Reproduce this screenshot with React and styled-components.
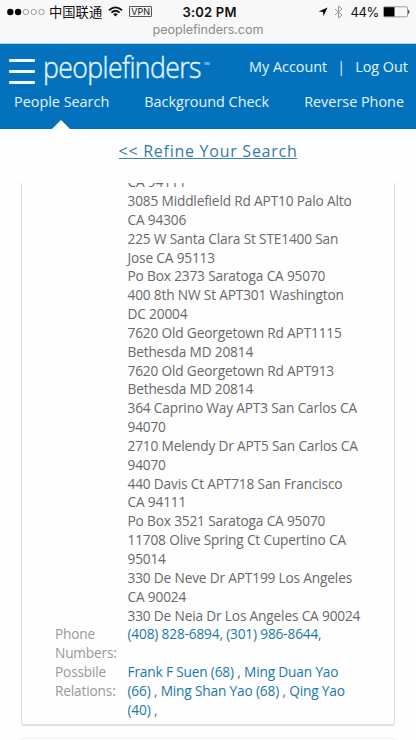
import React from "react";
import styled, { createGlobalStyle } from "styled-components";

const GlobalStyle = createGlobalStyle`
  * { box-sizing: border-box; }
  html, body { margin: 0; padding: 0; background: #fefefe; overflow: hidden; }
`;

const Screen = styled.main`
  display: flex;
  flex-direction: column;
  width: 416px;
  height: 740px;
  overflow: hidden;
  background: #fefefe;
  font-family: "Open Sans", sans-serif;
`;

const BrowserChrome = styled.div`
  height: 44px;
  flex: none;
  background: #f8f8f8;
  border-bottom: 1px solid #a3dcee;
  font-family: Inter, "Noto Sans CJK SC", sans-serif;
`;

const StatusBar = styled.div`
  display: grid;
  grid-template-columns: 175.5px 100px 1fr;
  align-items: center;
  height: 22px;
  padding: 1px 6px 0 7px;
  color: #111;
`;

const StatusGroup = styled.div`
  display: flex;
  align-items: center;
  justify-content: ${(p) => (p.$end ? "flex-end" : "flex-start")};
`;

const Carrier = styled.span`
  margin-left: 4px;
  font: 13.3px/20px "Noto Sans CJK SC", sans-serif;
`;

const WifiIcon = styled.svg`
  margin-left: 6px;
`;

const VpnBadge = styled.span`
  width: 23px;
  height: 11px;
  margin-left: 6px;
  border: 1px solid #555;
  border-radius: 1px;
  font-size: 9px;
  line-height: 9px;
  text-align: center;
`;

const Clock = styled.span`
  font-size: 13px;
  font-weight: 600;
  line-height: 20px;
  white-space: nowrap;
  letter-spacing: 0.2px;
`;

const Percent = styled.span`
  margin: 0 4px 0 7px;
  font-size: 13px;
  line-height: 20px;
  letter-spacing: -0.35px;
`;

const BluetoothIcon = styled.svg`
  margin-left: 6px;
`;

const Address = styled.div`
  text-align: center;
  color: #8b8b8d;
  font-size: 12.6px;
  line-height: 16px;
  letter-spacing: -0.04px;
`;

const SiteHeader = styled.header`
  height: 85px;
  flex: none;
  background: #0471bd;
  color: #e2f6fc;
`;

const BrandRow = styled.div`
  display: flex;
  height: 46px;
  padding: 0 8px 0 9px;
`;

const MenuButton = styled.button`
  display: flex;
  flex-direction: column;
  gap: 8px;
  width: 26px;
  padding: 15px 0 0;
  border: 0;
  background: none;
`;

const MenuBar = styled.span`
  height: 3px;
  border-radius: 1px;
  background: #f2fcff;
`;

const Logo = styled.div`
  display: flex;
  flex: none;
  margin-left: 8px;
  width: 206px;
  white-space: nowrap;
`;

const LogoName = styled.span`
  width: 159px;
  font: 300 28.5px/46px "Open Sans", sans-serif;
  letter-spacing: -0.65px;
  transform: scaleX(0.935);
  transform-origin: left;
  -webkit-text-stroke: 0.4px currentColor;
`;

const ServiceMark = styled.sup`
  font-size: 4px;
  line-height: 6px;
  margin: 17px 0 0 2px;
`;

const AccountLinks = styled.div`
  display: flex;
  justify-content: space-between;
  flex: 1;
  font-size: 14.4px;
  line-height: 46px;
`;

const AccountItem = styled.span`
  white-space: nowrap;
`;

const Tabs = styled.nav`
  display: flex;
  justify-content: space-between;
  height: 39px;
  padding: 0 12px 0 14px;
`;

const Tab = styled.a`
  position: relative;
  color: inherit;
  font-size: 14.4px;
  line-height: 24px;
  white-space: nowrap;
`;

const ActivePointer = styled.svg`
  position: absolute;
  left: 38px;
  bottom: 0;
`;

const RefineBar = styled.div`
  height: 54px;
  flex: none;
  text-align: center;
`;

const RefineLink = styled.a`
  display: inline-block;
  height: 29px;
  margin-top: 1px;
  border-bottom: 1px solid #4283ac;
  color: #387ba8;
  font-size: 16px;
  font-weight: 500;
  line-height: 43px;
  letter-spacing: 0.74px;
  white-space: nowrap;
`;

const CardViewport = styled.section`
  display: flex;
  flex-direction: column;
  width: 374px;
  height: 543px;
  flex: none;
  justify-content: flex-end;
  overflow: hidden;
  margin-left: 21px;
  border: 1px solid #ddd;
  border-top: 0;
  border-bottom: 2px solid #e1e1e1;
  border-radius: 0 0 3px 3px;
  padding-bottom: 4.4px;
`;

const Field = styled.div`
  display: grid;
  flex: none;
  grid-template-columns: 72.5px 1fr;
  padding-left: 33px;
  font-size: 13.7px;
  line-height: 18.85px;
  letter-spacing: -0.17px;
`;

const Label = styled.div`
  color: #989898;
`;

const Line = styled.div`
  color: ${(p) => (p.$link ? "#187aa7" : "#696969")};
  height: 18.85px;
  white-space: pre;
`;

const Mark = styled.span`
  color: #696969;
`;

const NextCard = styled.section`
  width: 374px;
  height: 20px;
  flex: none;
  margin: 12px 0 0 21px;
  border: 1px solid #ddd;
  border-top-color: #f3f3f3;
  border-radius: 3px;
`;

const ADDRESSES = [
  "CA 94111",
  "3085 Middlefield Rd APT10 Palo Alto",
  "CA 94306",
  "225 W Santa Clara St STE1400 San",
  "Jose CA 95113",
  "Po Box 2373 Saratoga CA 95070",
  "400 8th NW St APT301 Washington",
  "DC 20004",
  "7620 Old Georgetown Rd APT1115",
  "Bethesda MD 20814",
  "7620 Old Georgetown Rd APT913",
  "Bethesda MD 20814",
  "364 Caprino Way APT3 San Carlos CA",
  "94070",
  "2710 Melendy Dr APT5 San Carlos CA",
  "94070",
  "440 Davis Ct APT718 San Francisco",
  "CA 94111",
  "Po Box 3521 Saratoga CA 95070",
  "11708 Olive Spring Ct Cupertino CA",
  "95014",
  "330 De Neve Dr APT199 Los Angeles",
  "CA 90024",
  "330 De Neia Dr Los Angeles CA 90024",
];

function SignalDots() {
  return (
    <svg width="38" height="8" viewBox="0 0 38 8">
      {[0, 1, 2, 3, 4].map((i) => (
        <circle
          key={i}
          cx={3.3 + i * 7.8}
          cy="4"
          r={i < 2 ? 3.2 : 2.7}
          fill={i < 2 ? "#080808" : "none"}
          stroke={i < 2 ? "none" : "#777"}
          strokeWidth="0.7"
        />
      ))}
    </svg>
  );
}

export default function App() {
  return (
    <Screen>
      <GlobalStyle />
      <BrowserChrome>
        <StatusBar>
          <StatusGroup>
            <SignalDots />
            <Carrier>中国联通</Carrier>
            <WifiIcon width="15" height="11" viewBox="0 0 15 11" fill="none" stroke="#111" strokeWidth="1.8">
              <path d="M1 4.2Q7.5-1.5 14 4.2M3.4 6.6Q7.5 3 11.6 6.6" />
              <path d="M5.2 8.3Q7.5 6.4 9.8 8.3L7.5 10.6Z" fill="#111" stroke="none" />
            </WifiIcon>
            <VpnBadge>VPN</VpnBadge>
          </StatusGroup>
          <Clock>3:02 PM</Clock>
          <StatusGroup $end>
            <svg width="10" height="10" viewBox="0 0 10 10">
              <path d="M9.5.5 5.5 9.3 5 5 .6 4.6Z" fill="#0c0c0c" />
            </svg>
            <BluetoothIcon width="9" height="14" viewBox="0 0 9 14" fill="none" stroke="#999" strokeWidth="1">
              <path d="M1 4 8 10 4.5 13V1L8 4 1 10" />
            </BluetoothIcon>
            <Percent>44%</Percent>
            <svg width="27" height="12" viewBox="0 0 27 12">
              <rect x=".5" y=".8" width="24" height="10" rx="1" fill="none" stroke="#888" strokeWidth=".8" />
              <rect x="1" y="1.2" width="10.5" height="9.2" fill="#050505" />
              <path d="M25.5 4q1.4 1.8 0 3.6Z" fill="#333" stroke="#333" strokeWidth=".6" />
            </svg>
          </StatusGroup>
        </StatusBar>
        <Address>peoplefinders.com</Address>
      </BrowserChrome>

      <SiteHeader>
        <BrandRow>
          <MenuButton aria-label="Menu">
            <MenuBar />
            <MenuBar />
            <MenuBar />
          </MenuButton>
          <Logo>
            <LogoName>peoplefinders</LogoName>
            <ServiceMark>SM</ServiceMark>
          </Logo>
          <AccountLinks>
            <AccountItem>My Account</AccountItem>
            <AccountItem>|</AccountItem>
            <AccountItem>Log Out</AccountItem>
          </AccountLinks>
        </BrandRow>
        <Tabs>
          <Tab>
            People Search
            <ActivePointer width="18" height="9" viewBox="0 0 18 9">
              <path d="M0 9 9 0 18 9Z" fill="#fefefe" />
            </ActivePointer>
          </Tab>
          <Tab>Background Check</Tab>
          <Tab>Reverse Phone</Tab>
        </Tabs>
      </SiteHeader>

      <RefineBar>
        <RefineLink>&lt;&lt; Refine Your Search</RefineLink>
      </RefineBar>

      <CardViewport>
        <Field>
          <Label />
          <div>
            {ADDRESSES.map((a, i) => (
              <Line key={i}>{a}</Line>
            ))}
          </div>
        </Field>
        <Field>
          <Label>
            Phone
            <br />
            Numbers:
          </Label>
          <Line $link>(408) 828-6894<Mark>,</Mark> (301) 986-8644<Mark>,</Mark></Line>
        </Field>
        <Field>
          <Label>
            Possbile
            <br />
            Relations:
          </Label>
          <div>
            <Line $link>Frank F Suen (68) <Mark>,</Mark> Ming Duan Yao</Line>
            <Line $link>(66) <Mark>,</Mark> Ming Shan Yao (68) <Mark>,</Mark> Qing Yao</Line>
            <Line $link>(40) <Mark>,</Mark></Line>
          </div>
        </Field>
      </CardViewport>
      <NextCard />
    </Screen>
  );
}
